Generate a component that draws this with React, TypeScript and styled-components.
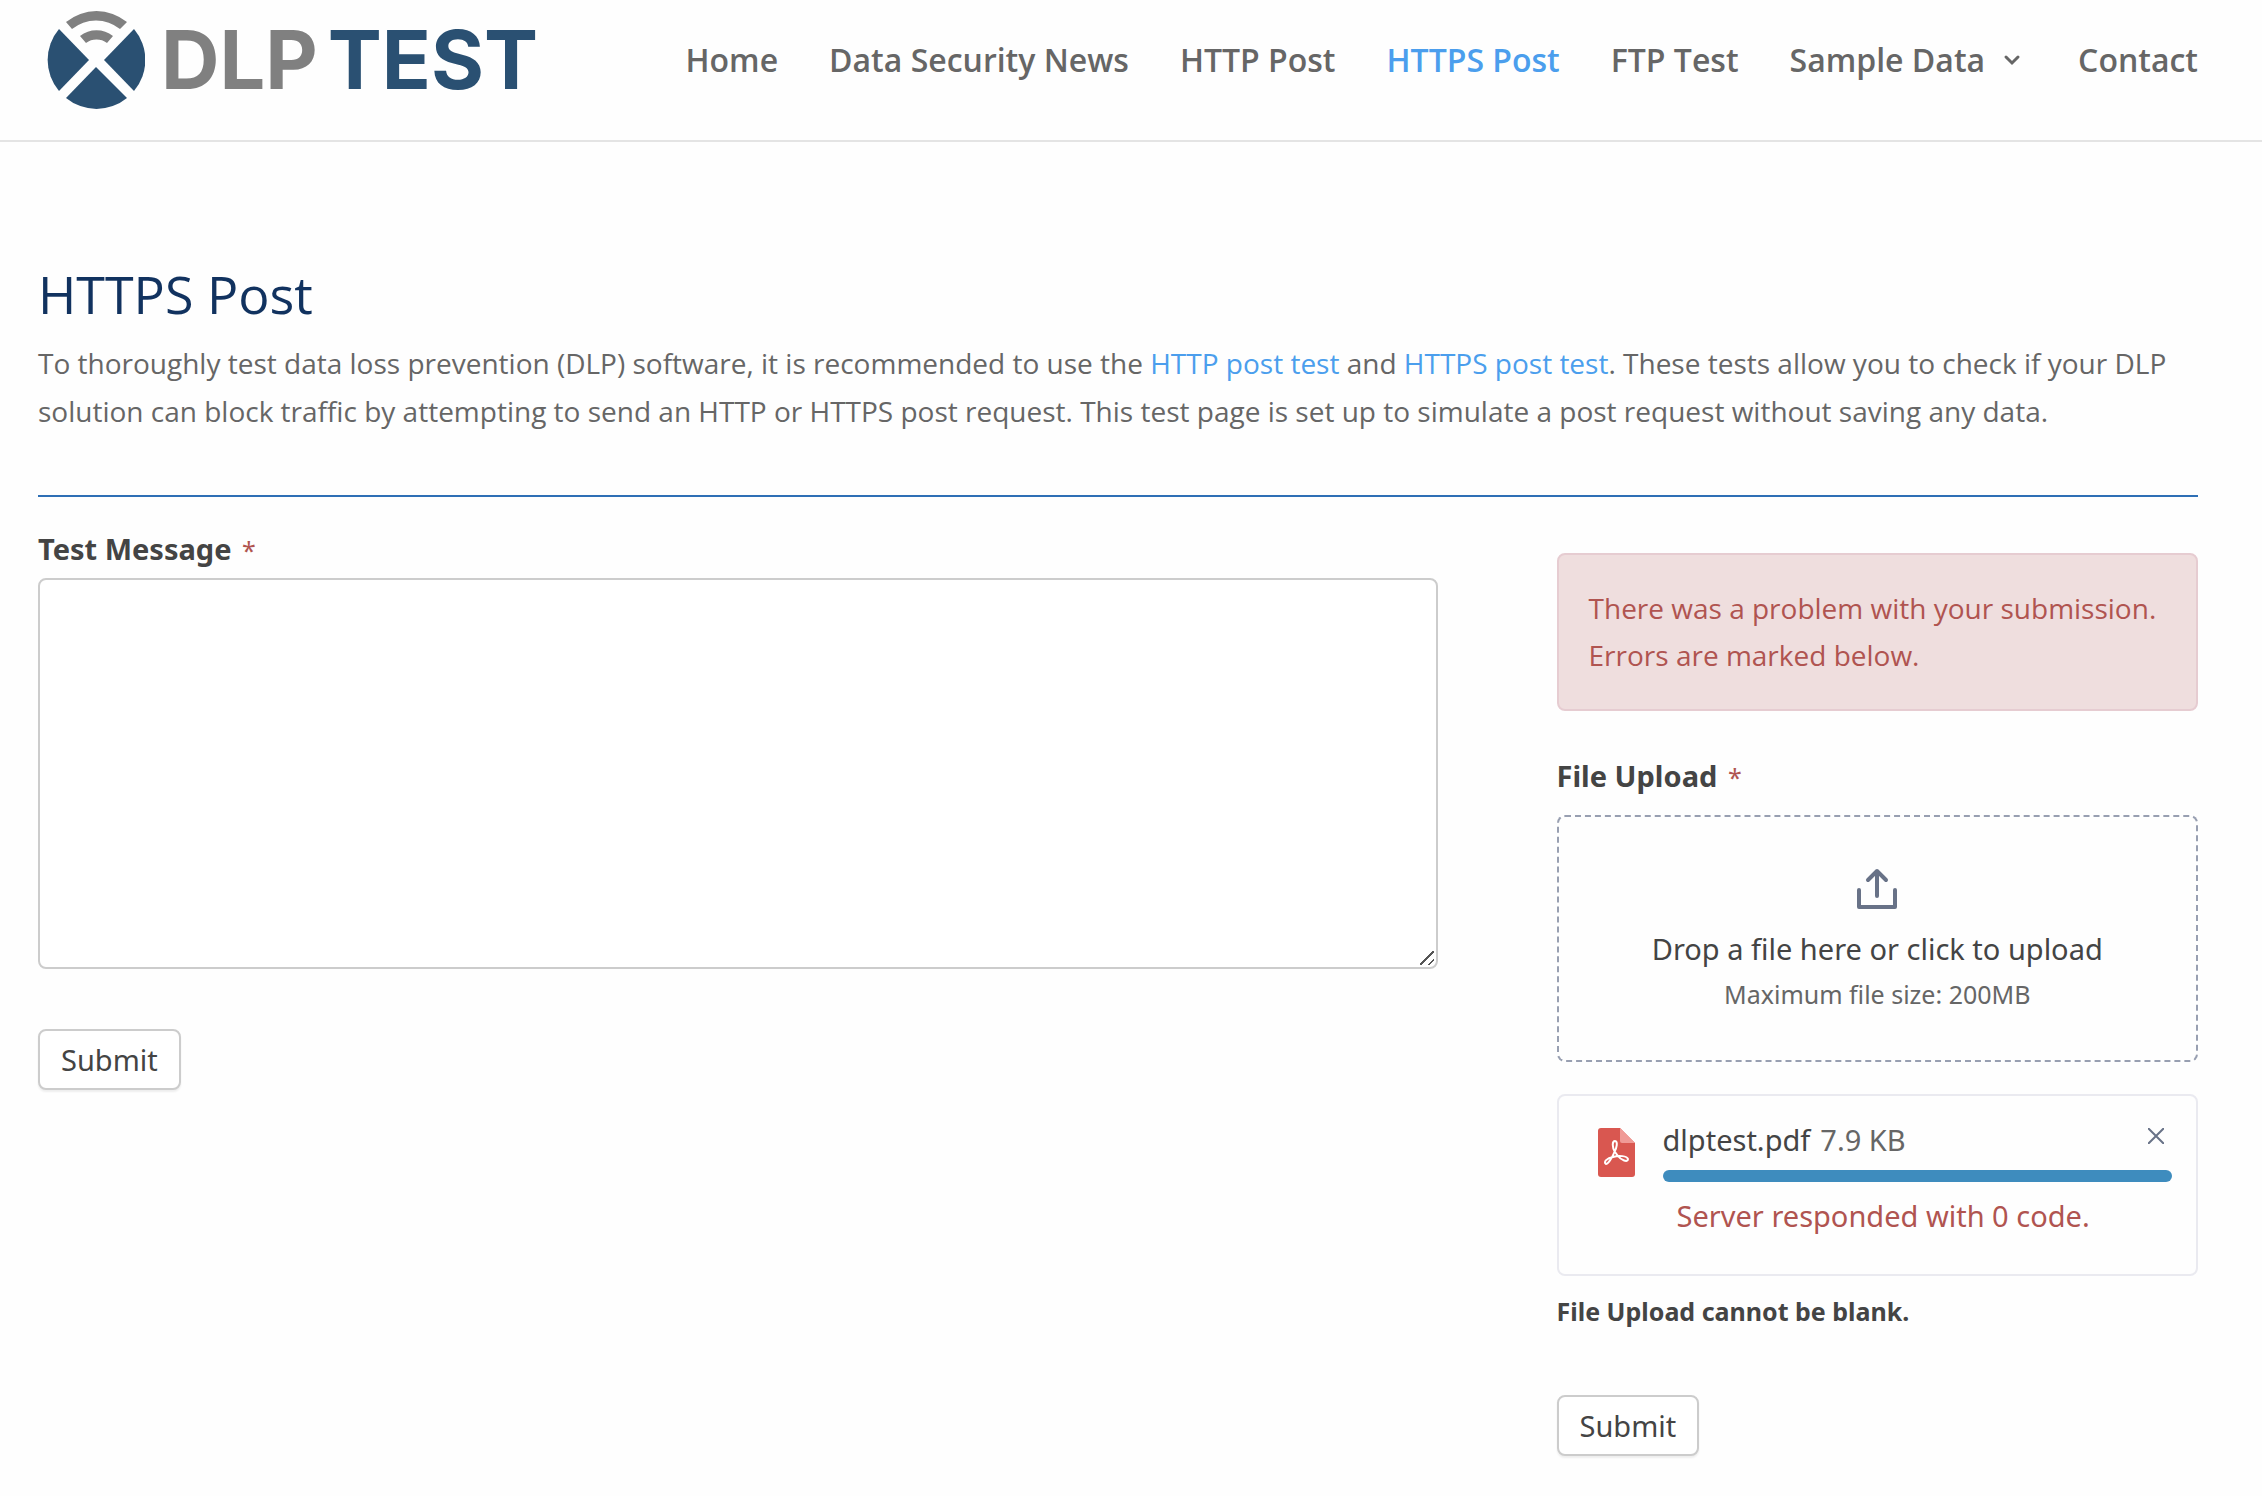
import React from "react";
import styled, { createGlobalStyle } from "styled-components";

const GlobalStyle = createGlobalStyle`
  *, *::before, *::after { box-sizing: border-box; }
  body { margin: 0; background: #fefefe; color: #666; font-family: "Open Sans", Arial, sans-serif; font-size: 28px; line-height: 48px; }
  a { color: #4b9eed; text-decoration: none; }
  h1, p, ul { margin: 0; padding: 0; }
`;

const Header = styled.header`
  display: flex;
  align-items: flex-start;
  justify-content: space-between;
  height: 142px;
  padding: 11px 64px 0 47px;
  border-bottom: 2px solid #e4e4e4;
`;

const Brand = styled.a`
  display: flex;
  align-items: center;
  gap: 16px;
  height: 98px;
`;

const BrandMark = styled.svg`
  display: block;
  width: 98px;
  height: 98px;
`;

const Wordmark = styled.span`
  display: flex;
  gap: 10px;
  font-family: Inter, Arial, sans-serif;
  font-size: 81px;
  font-weight: 700;
  line-height: 98px;
`;

const WordPart = styled.span<{ $color: string }>`
  color: ${(p) => p.$color};
`;

const Menu = styled.ul`
  display: flex;
  gap: 51px;
  padding-top: 25px;
  list-style: none;
`;

const MenuLink = styled.a<{ $active?: boolean }>`
  display: flex;
  align-items: center;
  gap: 18px;
  color: ${(p) => (p.$active ? "#4b9eed" : "#666")};
  font-size: 32px;
  font-weight: 600;
  line-height: 48px;
  white-space: nowrap;
`;

const Page = styled.main`
  padding: 125px 64px 40px 38px;
`;

const Intro = styled.section`
  padding-bottom: 60px;
  border-bottom: 2px solid #2e6fb5;
`;

const Title = styled.h1`
  padding-bottom: 18px;
  color: #11325f;
  font-size: 52px;
  font-weight: 400;
  line-height: 54px;
`;

const Columns = styled.div`
  display: grid;
  grid-template-columns: 24fr 11fr;
  gap: 119px;
  align-items: start;
`;

const Form = styled.form<{ $top: number }>`
  display: flex;
  flex-direction: column;
  align-items: stretch;
  padding-top: ${(p) => p.$top}px;
  color: #444;
  font-family: "Noto Sans", sans-serif;
  font-size: 29px;
  line-height: 40px;
`;

const Label = styled.label<{ $gap: number }>`
  margin-bottom: ${(p) => p.$gap}px;
  font-weight: 700;
`;

const Required = styled.span`
  margin-left: 3px;
  color: #b05450;
  font-size: 25px;
  font-weight: 400;
`;

const MessageBox = styled.textarea`
  display: block;
  width: 100%;
  height: 391px;
  padding: 12px;
  border: 2px solid #ccc;
  border-radius: 8px;
  background: #fff
    linear-gradient(
      135deg,
      transparent 46%,
      #555 46%,
      #555 54%,
      transparent 54%,
      transparent 75%,
      #555 75%,
      #555 83%,
      transparent 83%
    )
    right 2px bottom 2px / 14px 14px no-repeat;
  color: #555;
  font: inherit;
  resize: vertical;

  &::-webkit-resizer {
    background: transparent;
  }
`;

const SubmitButton = styled.button<{ $gap: number }>`
  align-self: flex-start;
  height: 61px;
  margin-top: ${(p) => p.$gap}px;
  padding: 0 21px;
  border: 2px solid #ccc;
  border-radius: 8px;
  background: #fff;
  box-shadow: 0 2px 2px #eee;
  color: #444;
  font: inherit;
`;

const Alert = styled.p`
  margin-bottom: 45px;
  padding: 30px;
  border: 2px solid #e6ccd1;
  border-radius: 8px;
  background: #efdede;
  color: #b05450;
  font-family: "Open Sans", Arial, sans-serif;
  font-size: 28px;
  line-height: 47px;
`;

const DropZone = styled.button`
  display: flex;
  flex-direction: column;
  align-items: center;
  padding: 50px 20px 46px;
  border: 2px dashed #989fb1;
  border-radius: 8px;
  background: transparent;
  color: #444;
  font: inherit;
`;

const UploadIcon = styled.svg`
  width: 46px;
  height: 46px;
  margin-bottom: 16px;
`;

const Hint = styled.span`
  margin-top: 5px;
  color: #666;
  font-size: 25px;
`;

const FileCard = styled.div`
  display: flex;
  gap: 28px;
  height: 182px;
  margin-top: 32px;
  padding: 24px 24px 24px 39px;
  border: 2px solid #eaeaf0;
  border-radius: 8px;
`;

const PdfIcon = styled.svg`
  flex: none;
  width: 37px;
  height: 49px;
  margin-top: 8px;
`;

const FileInfo = styled.div`
  flex: 1;
  min-width: 0;
`;

const FileRow = styled.div`
  display: flex;
  align-items: center;
  gap: 10px;
  line-height: 40px;
`;

const FileSize = styled.span`
  color: #666;
`;

const RemoveButton = styled.button`
  display: flex;
  margin-left: auto;
  padding: 0 8px 8px;
  border: 0;
  background: none;
`;

const Progress = styled.div`
  height: 12px;
  margin-top: 10px;
  border-radius: 6px;
  background: #3e8cbe;
`;

const UploadError = styled.p`
  padding: 14px;
  color: #b05450;
`;

const FieldError = styled.p`
  margin-top: 15px;
  font-size: 25px;
  font-weight: 700;
`;

const menu = [
  { label: "Home" },
  { label: "Data Security News" },
  { label: "HTTP Post" },
  { label: "HTTPS Post", active: true },
  { label: "FTP Test" },
  { label: "Sample Data", dropdown: true },
  { label: "Contact" },
];

export default function App() {
  return (
    <>
      <GlobalStyle />
      <Header>
        <Brand href="#" aria-label="DLP Test">
          <BrandMark viewBox="0 0 98 98" aria-hidden="true">
            <g fill="#2a5072">
              <path d="M12 18 42 49 12 80A48 48 0 0 1 12 18Z" />
              <path d="M87 18 57 49 87 80A48 48 0 0 0 87 18Z" />
              <path d="M49 56 80 87A48 48 0 0 1 19 87Z" />
            </g>
            <g fill="#808080">
              <path d="M19 11A48 48 0 0 1 80 11L73 18A38 38 0 0 0 25 18Z" />
              <path d="M33 25A27 27 0 0 1 66 25L60 32A18 18 0 0 0 39 32Z" />
            </g>
          </BrandMark>
          <Wordmark>
            <WordPart $color="#808080">DLP</WordPart>
            <WordPart $color="#2a5072">TEST</WordPart>
          </Wordmark>
        </Brand>
        <nav>
          <Menu>
            {menu.map((item) => (
              <li key={item.label}>
                <MenuLink href="#" $active={item.active}>
                  {item.label}
                  {item.dropdown && (
                    <svg width="24" height="18" viewBox="0 0 24 18" fill="none" stroke="#666" strokeWidth="3" strokeLinecap="round" aria-hidden="true">
                      <path d="M3 6 9 12 15 6" />
                    </svg>
                  )}
                </MenuLink>
              </li>
            ))}
          </Menu>
        </nav>
      </Header>
      <Page>
        <Intro>
          <Title>HTTPS Post</Title>
          <p>
            To thoroughly test data loss prevention (DLP) software, it is recommended to use the{" "}
            <a href="#">HTTP post test</a> and <a href="#">HTTPS post test</a>. These tests allow you to check if
            your DLP solution can block traffic by attempting to send an HTTP or HTTPS post request. This test page
            is set up to simulate a post request without saving any data.
          </p>
        </Intro>
        <Columns>
          <Form $top={32} onSubmit={(e) => e.preventDefault()}>
            <Label htmlFor="message" $gap={8}>
              Test Message <Required>*</Required>
            </Label>
            <MessageBox id="message" />
            <SubmitButton $gap={60}>Submit</SubmitButton>
          </Form>
          <Form $top={56} onSubmit={(e) => e.preventDefault()}>
            <Alert role="alert">There was a problem with your submission. Errors are marked below.</Alert>
            <Label htmlFor="upload" $gap={18}>
              File Upload <Required>*</Required>
            </Label>
            <DropZone id="upload" type="button">
              <UploadIcon viewBox="0 0 46 46" fill="none" stroke="#687287" strokeWidth="4" strokeLinecap="round" strokeLinejoin="round" aria-hidden="true">
                <path d="M5 23V40H41V23M23 29V4M14 13 23 4 32 13" />
              </UploadIcon>
              <span>Drop a file here or click to upload</span>
              <Hint>Maximum file size: 200MB</Hint>
            </DropZone>
            <FileCard>
              <PdfIcon viewBox="0 0 37 49" aria-hidden="true">
                <path d="M3 0H22L37 15V46Q37 49 34 49H3Q0 49 0 46V3Q0 0 3 0Z" fill="#d95750" />
                <path d="M22 0 37 15H24Q22 15 22 13Z" fill="#f09a96" />
                <path
                  d="M17 24C14 19 14 13 17 13C20 13 19 20 16 25C14 30 10 36 8 36C5 34 9 30 15 29C21 27 29 28 30 31C30 35 23 32 20 28Z"
                  fill="none"
                  stroke="#fff"
                  strokeWidth="2"
                />
              </PdfIcon>
              <FileInfo>
                <FileRow>
                  <span>dlptest.pdf</span>
                  <FileSize>7.9 KB</FileSize>
                  <RemoveButton type="button" aria-label="Remove file">
                    <svg width="16" height="16" viewBox="0 0 16 16" stroke="#687287" strokeWidth="2" aria-hidden="true">
                      <path d="M0 0 16 16M16 0 0 16" />
                    </svg>
                  </RemoveButton>
                </FileRow>
                <Progress />
                <UploadError>Server responded with 0 code.</UploadError>
              </FileInfo>
            </FileCard>
            <FieldError>File Upload cannot be blank.</FieldError>
            <SubmitButton $gap={64}>Submit</SubmitButton>
          </Form>
        </Columns>
      </Page>
    </>
  );
}
